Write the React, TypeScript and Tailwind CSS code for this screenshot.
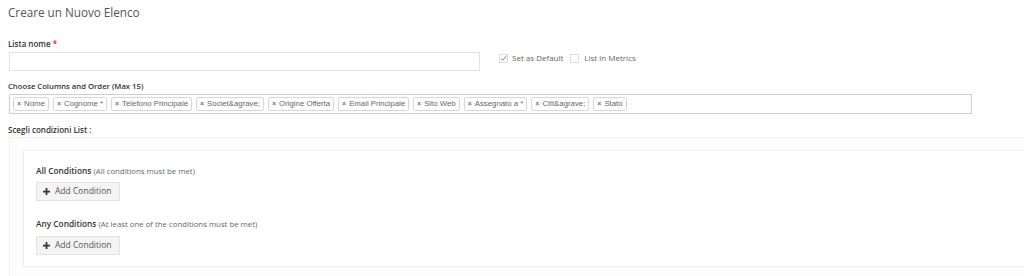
import React from "react";

const tags = [
  "Nome",
  "Cognome *",
  "Telefono Principale",
  "Societ&agrave;",
  "Origine Offerta",
  "Email Principale",
  "Sito Web",
  "Assegnato a *",
  "Citt&agrave;",
  "Stato",
];

function AddButton() {
  return (
    <button className="flex items-center gap-[5px] h-[19px] w-[84px] pl-[6px] border border-[#e3e3e3] bg-[#f4f4f4] text-[#555] text-[8.5px] whitespace-nowrap">
      <svg width="7" height="7" viewBox="0 0 8 8">
        <path d="M3 0h2v3h3v2H5v3H3V5H0V3h3z" fill="#333" />
      </svg>
      <span>Add Condition</span>
    </button>
  );
}

export default function App() {
  return (
    <div
      className="w-[1024px] h-[276px] overflow-hidden bg-white text-[#333]"
      style={{ fontFamily: '"Open Sans", sans-serif' }}
    >
      <div className="pl-[8px] pt-[4px]">
        <div className="text-[11.7px] text-[#555] leading-[16px]">Creare un Nuovo Elenco</div>
        <div className="mt-[18px] text-[8px] leading-[12px] font-semibold text-[#333]">
          Lista nome <span className="text-[#e02020]">*</span>
        </div>
        <div className="flex items-start mt-[2px]">
          <div className="ml-[1px] w-[471px] h-[19px] border border-[#e2e2e2] bg-white" />
          <div className="flex items-center ml-[19px] mt-[1px] text-[8px] leading-[10px] text-[#666]">
            <span className="w-[9px] h-[9px] border border-[#ddd] flex items-center justify-center">
              <svg width="9" height="9" viewBox="0 0 10 10">
                <path d="M1.5 5.2l2.3 2.3L9.5 0.8" stroke="#555" strokeWidth="1.1" fill="none" />
              </svg>
            </span>
            <span className="ml-[4px]">Set as Default</span>
            <span className="ml-[7px] w-[9px] h-[9px] border border-[#ddd]" />
            <span className="ml-[5px]">List in Metrics</span>
          </div>
        </div>
        <div className="mt-[9px] text-[7.7px] leading-[12px] font-semibold text-[#333]">
          Choose Columns and Order (Max 15)
        </div>
        <div className="mt-[2px] ml-[1px] w-[963px] h-[20px] border border-[#cfcfcf] flex items-center gap-[4px] pl-[3px]">
          {tags.map((t) => (
            <span
              key={t}
              className="flex items-center h-[14px] px-[3px] border border-[#d7d7d7] rounded-[2px] text-[7.8px] text-[#666] gap-[3px] whitespace-nowrap"
              style={{ fontFamily: '"Liberation Sans", Arial, sans-serif' }}
            >
              <span className="text-[7px] font-bold text-[#777]">×</span>
              {t}
            </span>
          ))}
        </div>
        <div className="mt-[10px] text-[8px] leading-[12px] font-semibold text-[#333]">
          Scegli condizioni List :
        </div>
        <div className="mt-[1px] ml-[1px] w-[1100px] h-[150px] border border-[#f0f0f0] bg-[#fdfdfd] pl-[13px] pt-[12px]">
          <div className="w-[1100px] h-[117px] border border-[#ececec] bg-white pl-[12px] pt-[14px]">
            <div className="text-[8.3px] leading-[12px] text-[#333] whitespace-nowrap">
              <span className="font-semibold">All Conditions</span>{" "}
              <span className="text-[7.8px] text-[#666]">(All conditions must be met)</span>
            </div>
            <div className="mt-[5px]">
              <AddButton />
            </div>
            <div className="mt-[17px] text-[8.3px] leading-[12px] text-[#333] whitespace-nowrap">
              <span className="font-semibold">Any Conditions</span>{" "}
              <span className="text-[7.8px] text-[#666]">(At least one of the conditions must be met)</span>
            </div>
            <div className="mt-[6px]">
              <AddButton />
            </div>
          </div>
        </div>
      </div>
    </div>
  );
}
